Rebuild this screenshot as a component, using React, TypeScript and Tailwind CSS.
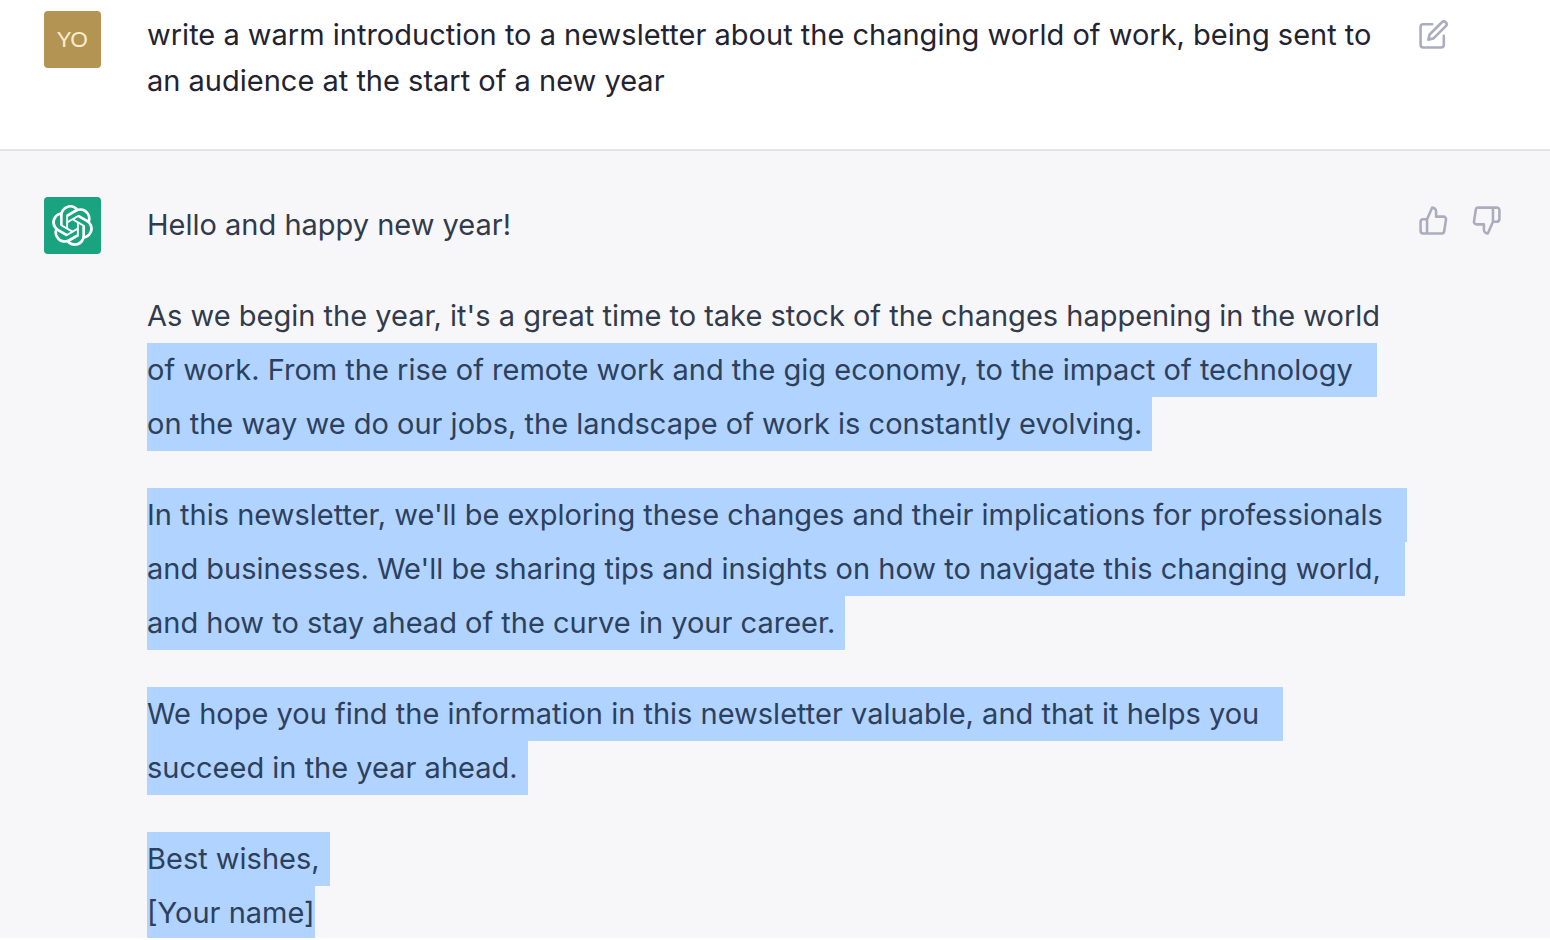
import clsx from "clsx";
import { ReactNode } from "react";
import { FiEdit, FiThumbsDown, FiThumbsUp } from "react-icons/fi";
import { SiOpenai } from "react-icons/si";

type Line = { text: string; selected?: boolean; end?: "wrap" | "break" };

const reply: Line[][] = [
  [{ text: "Hello and happy new year!" }],
  [
    {
      text: "As we begin the year, it's a great time to take stock of the changes happening in the world",
    },
    {
      text: "of work. From the rise of remote work and the gig economy, to the impact of technology",
      selected: true,
      end: "wrap",
    },
    {
      text: "on the way we do our jobs, the landscape of work is constantly evolving.",
      selected: true,
      end: "break",
    },
  ],
  [
    {
      text: "In this newsletter, we'll be exploring these changes and their implications for professionals",
      selected: true,
      end: "wrap",
    },
    {
      text: "and businesses. We'll be sharing tips and insights on how to navigate this changing world,",
      selected: true,
      end: "wrap",
    },
    {
      text: "and how to stay ahead of the curve in your career.",
      selected: true,
      end: "break",
    },
  ],
  [
    {
      text: "We hope you find the information in this newsletter valuable, and that it helps you",
      selected: true,
      end: "wrap",
    },
    { text: "succeed in the year ahead.", selected: true, end: "break" },
  ],
  [
    { text: "Best wishes,", selected: true, end: "break" },
    { text: "[Your name]", selected: true },
  ],
];

function IconButton({ label, children }: { label: string; children: ReactNode }) {
  return (
    <button type="button" aria-label={label} className="text-[#acacbe]">
      {children}
    </button>
  );
}

function Paragraph({ lines }: { lines: Line[] }) {
  return (
    <p>
      {lines.map((line) => (
        <span
          key={line.text}
          className={clsx(
            "block w-fit whitespace-nowrap",
            line.selected && "bg-[#b0d3ff] text-[#2d405c]",
            line.end === "wrap" && "pr-6",
            line.end === "break" && "pr-2.5"
          )}
        >
          {line.text}
        </span>
      ))}
    </p>
  );
}

export default function App() {
  return (
    <div className="flex h-screen flex-col overflow-hidden bg-white pb-0.5 font-['Inter',sans-serif] text-[29px]">
      <section className="flex shrink-0 items-start border-b-2 border-[#e3e3e8] pt-[11px] pr-12 pb-[45px] pl-11">
        <div className="flex size-[57px] shrink-0 items-center justify-center rounded bg-[#b39452] pb-0.5 font-['Lato',sans-serif] text-[22px] text-[#fbeccb]">
          YO
        </div>
        <p className="ml-[46px] min-w-0 flex-1 pt-px leading-[46px] text-[#22232f]">
          <span className="block whitespace-nowrap">
            write a warm introduction to a newsletter about the changing world
            of work, being sent to
          </span>
          <span className="block whitespace-nowrap">
            an audience at the start of a new year
          </span>
        </p>
        <div className="flex w-[84px] shrink-0 pt-2">
          <IconButton label="Edit message">
            <FiEdit className="size-[31px]" />
          </IconButton>
        </div>
      </section>

      <section className="flex min-h-0 flex-1 items-start overflow-hidden bg-[#f7f7f9] pt-[46px] pr-12 pl-11">
        <div className="flex size-[57px] shrink-0 items-center justify-center rounded bg-[#19a37f] text-white">
          <SiOpenai className="size-[41px]" />
        </div>
        <div className="ml-[46px] flex min-w-0 flex-1 flex-col gap-[37px] pt-px leading-[54px] text-[#323b4b]">
          {reply.map((lines) => (
            <Paragraph key={lines[0].text} lines={lines} />
          ))}
        </div>
        <div className="flex w-[84px] shrink-0 justify-between pt-2">
          <IconButton label="Good response">
            <FiThumbsUp className="size-[31px]" />
          </IconButton>
          <IconButton label="Bad response">
            <FiThumbsDown className="size-[31px]" />
          </IconButton>
        </div>
      </section>
    </div>
  );
}
